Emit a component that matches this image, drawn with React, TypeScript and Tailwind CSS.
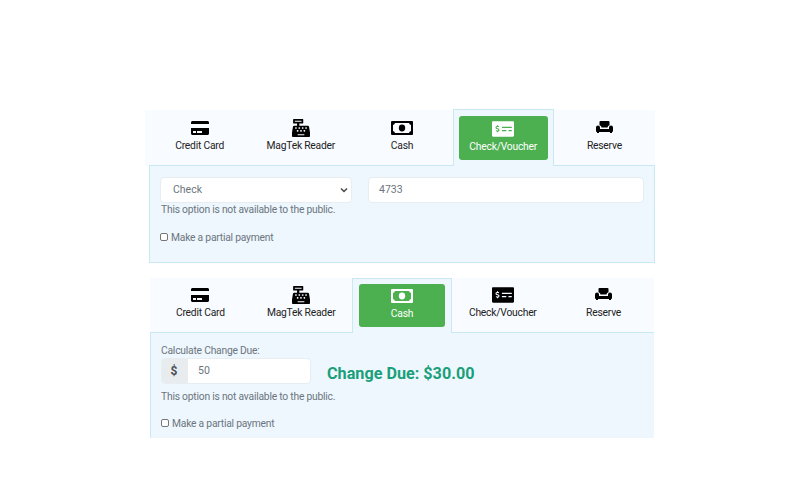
import { FaCreditCard, FaCashRegister, FaMoneyCheckAlt } from "react-icons/fa";
import type { SVGProps } from "react";

const CashIcon = (props: SVGProps<SVGSVGElement>) => (
  <svg viewBox="0 0 22 14" width="22" height="14" fill="currentColor" {...props}>
    <path fillRule="evenodd" d="M1 0h20a1 1 0 0 1 1 1v12a1 1 0 0 1-1 1H1a1 1 0 0 1-1-1V1a1 1 0 0 1 1-1zm3 2a2.4 2.4 0 0 1-2 2v6a2.4 2.4 0 0 1 2 2h14a2.4 2.4 0 0 1 2-2V4a2.4 2.4 0 0 1-2-2z" />
    <ellipse cx="11" cy="7" rx="3.2" ry="3.4" />
  </svg>
);

const CouchIcon = (props: SVGProps<SVGSVGElement>) => (
  <svg viewBox="0 0 17 12" width="17" height="12" fill="currentColor" {...props}>
    <path d="M3.5 1a1 1 0 0 1 1-1h8a1 1 0 0 1 1 1v3.2a2.5 2.5 0 0 0-2 2.3H5.5a2.5 2.5 0 0 0-2-2.3z" />
    <path d="M0 6.5a2 2 0 0 1 4 0V8h9V6.5a2 2 0 0 1 4 0V10a1 1 0 0 1-1 1v1h-2v-1H3v1H1v-1a1 1 0 0 1-1-1z" />
  </svg>
);

const tabs = [
  { label: "Credit Card", icon: <FaCreditCard className="text-[18px]" /> },
  { label: "MagTek Reader", icon: <FaCashRegister className="text-[18px]" /> },
  { label: "Cash", icon: <div className="flex h-[18px] items-center"><CashIcon /></div> },
  { label: "Check/Voucher", icon: <FaMoneyCheckAlt className="h-[18px] w-[22px]" /> },
  { label: "Reserve", icon: <div className="flex h-[18px] items-center pb-[3px]"><CouchIcon /></div> },
];

type TabRowProps = {
  active: number;
  rowClass: string;
  tabClass: string;
  activeClass: string;
  buttonClass: string;
};

const TabRow = ({ active, rowClass, tabClass, activeClass, buttonClass }: TabRowProps) => (
  <div className={`grid grid-cols-5 bg-[#f8fbff] ${rowClass}`}>
    {tabs.map((tab, i) =>
      i === active ? (
        <div key={tab.label} className={`border-x border-t border-[#c9e8f2] bg-[#eef7fe] ${activeClass}`}>
          <div className={`flex flex-col items-center rounded-[3px] bg-[#4caf50] text-white ${buttonClass}`}>
            {tab.icon}
            <span className="mt-[1px] text-[10.3px] leading-[16px] tracking-[-0.22px]">{tab.label}</span>
          </div>
        </div>
      ) : (
        <div key={tab.label} className={`flex flex-col items-center border-b border-[#c9e8f2] text-black ${tabClass}`}>
          {tab.icon}
          <span className="mt-[1px] text-[10.3px] leading-[16px] tracking-[-0.22px] text-[#222]">{tab.label}</span>
        </div>
      )
    )}
  </div>
);

const Partial = () => (
  <label className="flex items-center gap-[3px] text-[#6c757d]">
    <span className="mt-[-3px] h-[8px] w-[8px] rounded-[2px] border border-[#767676] bg-white" />
    <span className="text-[10.3px] leading-[14px] tracking-[-0.22px]">Make a partial payment</span>
  </label>
);

const Note = () => (
  <p className="text-[10.3px] leading-[14px] tracking-[-0.22px] text-[#6c757d]">This option is not available to the public.</p>
);

export default function App() {
  return (
    <div className="h-[500px] w-[800px] bg-white pt-[110px] pl-[145px] font-['Roboto',sans-serif]">
      <div className="w-[510px]">
        <TabRow
          active={3}
          rowClass="h-[56px] pl-[4px]"
          tabClass="pt-[9px]"
          activeClass="mt-[-1px] px-[5px] pt-[6px]"
          buttonClass="h-[44px] pt-[4px]"
        />
        <div className="ml-[4px] h-[97px] border-x border-b border-[#c9e8f2] bg-[#eef7fe] px-[10px] pt-[11px]">
          <div className="flex gap-[16px]">
            <div className="flex h-[26px] w-[192px] items-center justify-between rounded-[4px] border border-[#e6edf3] bg-white pr-[3px] pl-[12px] text-[10.5px] text-[#6c757d]">
              <span>Check</span>
              <svg width="8" height="6" viewBox="0 0 8 6" fill="none" stroke="#444" strokeWidth="1.4">
                <path d="M1 1.5 4 4.5 7 1.5" />
              </svg>
            </div>
            <div className="flex h-[26px] w-[276px] items-center rounded-[4px] border border-[#e6edf3] bg-white pl-[10px] text-[10.5px] text-[#6c757d]">4733</div>
          </div>
          <div className="pl-[1px]"><Note /></div>
          <div className="mt-[14px]"><Partial /></div>
        </div>
      </div>

      <div className="mt-[15px] ml-[5px] w-[504px]">
        <TabRow
          active={2}
          rowClass="h-[55px]"
          tabClass="pt-[8px]"
          activeClass="px-[6px] pt-[5px]"
          buttonClass="h-[43px] pt-[3px]"
        />
        <div className="h-[105px] border-l border-[#c9e8f2] bg-[#eef7fe] pt-[11px] pl-[10px]">
          <p className="text-[10.3px] leading-[14px] tracking-[-0.22px] text-[#6c757d]">Calculate Change Due:</p>
          <div className="flex items-center">
            <div className="flex h-[26px] w-[150px] overflow-hidden rounded-[4px] border border-[#e6edf3] bg-white">
              <div className="flex w-[26px] items-center justify-center bg-[#e9ecef] pr-[2px] text-[12px] font-bold text-[#495057]">$</div>
              <div className="flex items-center pl-[10px] text-[10.5px] text-[#6c757d]">50</div>
            </div>
            <div className="ml-[16px] pt-[6px] text-[16.2px] leading-[20px] font-bold text-[#1a9f7a]">Change Due: $30.00</div>
          </div>
          <div className="mt-[6px]"><Note /></div>
          <div className="mt-[13px]"><Partial /></div>
        </div>
      </div>
    </div>
  );
}
